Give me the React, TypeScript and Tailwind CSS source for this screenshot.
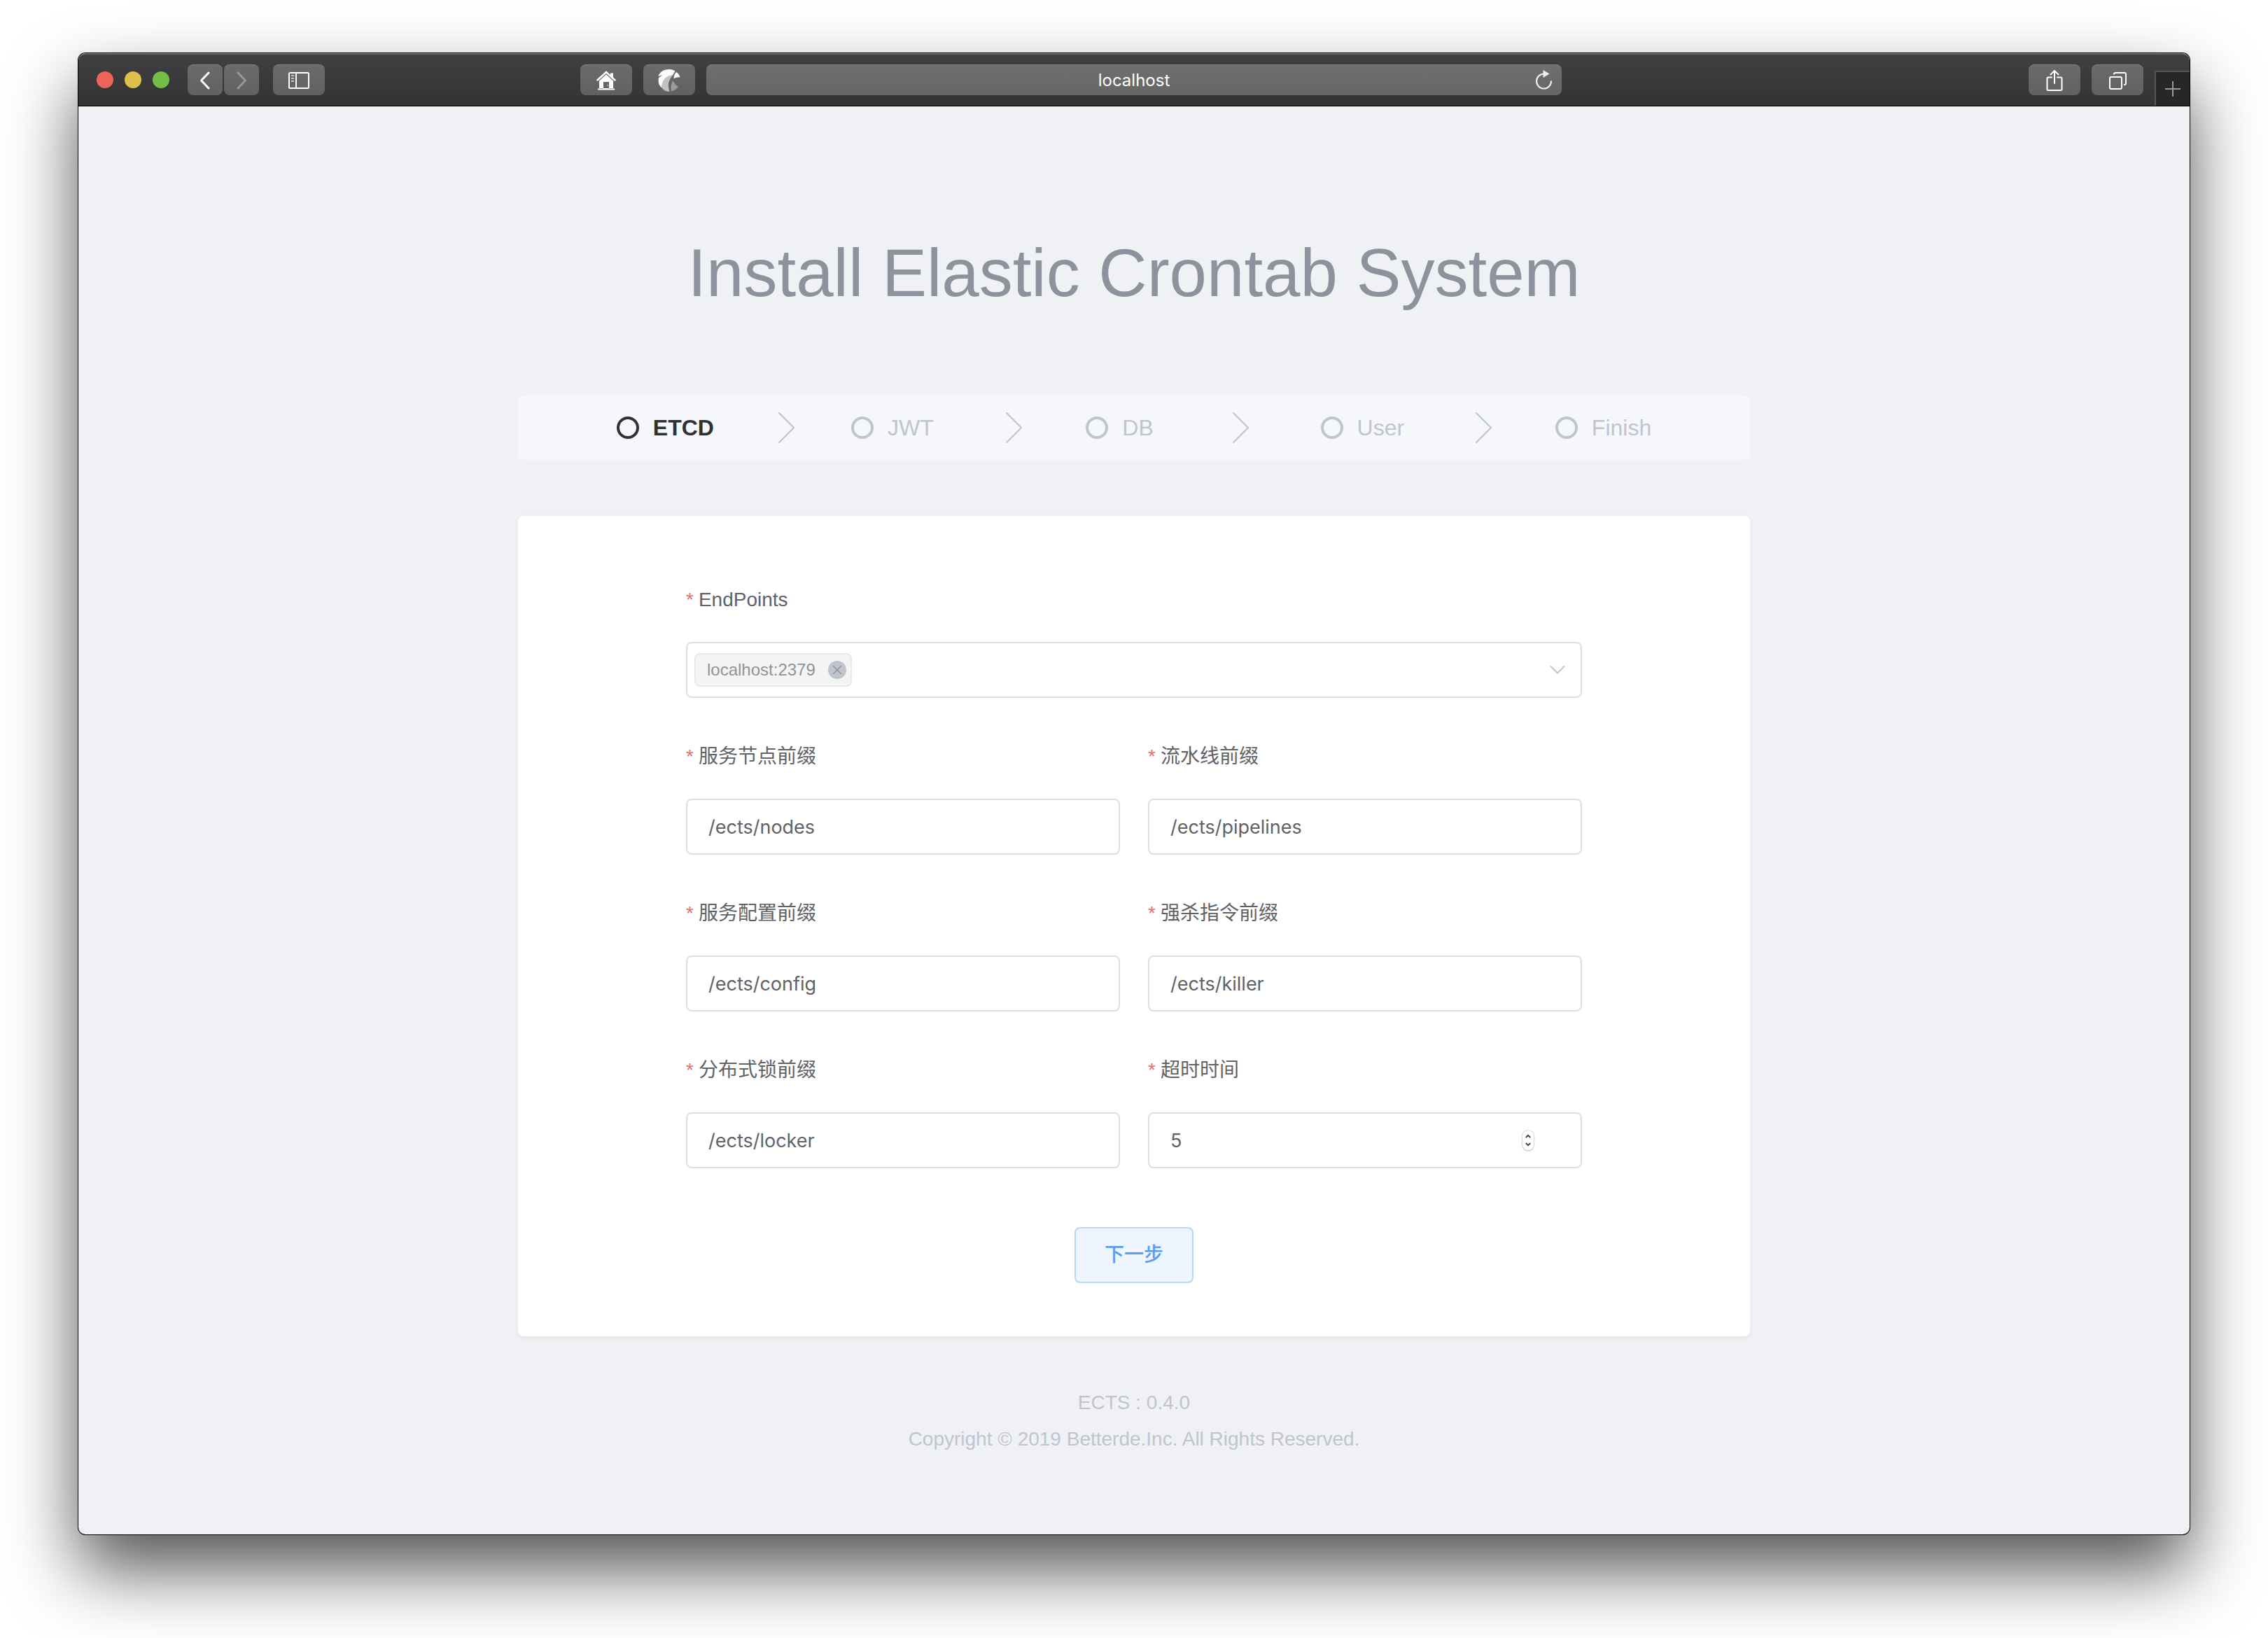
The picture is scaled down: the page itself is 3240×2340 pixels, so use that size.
import { useState, type ReactNode } from "react";

const steps = ["ETCD", "JWT", "DB", "User", "Finish"];

const fields = [
  { id: "nodes", label: "服务节点前缀", value: "/ects/nodes" },
  { id: "pipelines", label: "流水线前缀", value: "/ects/pipelines" },
  { id: "config", label: "服务配置前缀", value: "/ects/config" },
  { id: "killer", label: "强杀指令前缀", value: "/ects/killer" },
  { id: "locker", label: "分布式锁前缀", value: "/ects/locker" },
];

function ToolButton({ label, narrow, children }: { label: string; narrow?: boolean; children: ReactNode }) {
  return (
    <button
      type="button"
      aria-label={label}
      className={
        (narrow ? "w-[50px]" : "w-[74px]") +
        " flex h-11 shrink-0 items-center justify-center rounded-lg border-t border-[#818183] bg-linear-to-b from-[#6b6b6d] to-[#616163]"
      }
    >
      {children}
    </button>
  );
}

function Toolbar() {
  return (
    <header className="grid h-[76px] grid-cols-[1fr_1222px_1fr] items-center rounded-t-[10px] border-y border-t-[#7c7e7c] border-b-black bg-linear-to-b from-[#404042] to-[#333334] shadow-[inset_0_1px_0_#5e605f]">
      <div className="flex items-center justify-between pr-4 pl-[26px]">
        <div className="flex items-center">
          <div className="flex gap-4">
            <button type="button" aria-label="Close" className="size-6 rounded-full bg-[#ed655a]" />
            <button type="button" aria-label="Minimize" className="size-6 rounded-full bg-[#e0c04c]" />
            <button type="button" aria-label="Zoom" className="size-6 rounded-full bg-[#72be47]" />
          </div>
          <div className="ml-[26px] flex gap-0.5">
            <ToolButton label="Back" narrow>
              <svg width="50" height="42" viewBox="0 0 50 42" fill="none" stroke="#fff" strokeWidth="3" strokeLinecap="round" strokeLinejoin="round">
                <path d="M30 10 19.500 21 30 32" />
              </svg>
            </ToolButton>
            <ToolButton label="Forward" narrow>
              <svg width="50" height="42" viewBox="0 0 50 42" fill="none" stroke="#98989a" strokeWidth="3" strokeLinecap="round" strokeLinejoin="round">
                <path d="M20 10 30.500 21 20 32" />
              </svg>
            </ToolButton>
          </div>
          <div className="ml-5 flex">
            <ToolButton label="Sidebar">
              <svg width="30" height="24" viewBox="0 0 30 24" fill="none" stroke="#fff" strokeWidth="2">
                <rect x="1" y="1" width="28" height="22" rx="1.500" />
                <path d="M11 1v22" />
                <path d="M4 5h4M4 9h4M4 13h4" stroke="#c4c4c6" />
              </svg>
            </ToolButton>
          </div>
        </div>
        <div className="flex gap-4">
          <ToolButton label="Home">
            <svg width="28" height="28" viewBox="0 0 28 28" fill="#fff">
              <path d="M4 13.500 14 4.500 24 13.500V25H4zM10 16v10h8V16z" fillRule="evenodd" />
              <path d="M1.500 13.500 14 2l12.500 11.500" fill="none" stroke="#676769" strokeWidth="5" />
              <path d="M1.500 13.500 14 2l12.500 11.500" fill="none" stroke="#fff" strokeWidth="2.500" strokeLinecap="round" />
              <path d="M20 3.500h4V10l-4-3.500zM2 25.500h8v2H2zM18 25.500h8v2h-8zM10 26h8v1.500h-8z" />
              <circle cx="16.200" cy="21" r="0.700" />
            </svg>
          </ToolButton>
          <ToolButton label="Bookmark">
            <svg width="32" height="32" viewBox="0 0 32 32">
              <path d="M0.500 10C2 4 8 0 16 0c3.500 0 6.500 1 8.500 2.500L21 8.500C12 9.500 5.500 16 5.500 26.500 1 23 -0.500 17 1.200 12L6.500 8z" fill="#fbfbfb" />
              <path d="M21 8.500C18 12 14.500 18 15 23c0 3 .5 6 1.500 8.800C12 32 8 30 5.500 26.500 5 16 11.500 8.500 21 8.500z" fill="#c2c2c4" />
              <path d="M26 4c3 1.800 5 4.500 5.500 7.500-3-.5-6 .2-9 2 .2-4 1-7 3.500-9.500z" fill="#fff" />
              <path d="M21.500 16c1.500 4 4 7 7.500 9-2.500 3.200-5.500 5.500-10 6.500-1.300-5.500-.5-11 2.500-15.500z" fill="#9b9b9d" />
            </svg>
          </ToolButton>
        </div>
      </div>

      <div className="flex h-11 items-center rounded-lg border-t border-[#818183] bg-linear-to-b from-[#6f6f70] to-[#666667] pr-3 pl-[38px]">
        <input
          aria-label="Address"
          defaultValue="localhost"
          className="min-w-0 flex-1 bg-transparent text-center font-['Inter','Liberation_Sans',sans-serif] text-[24px] leading-8 text-white outline-none"
        />
        <button type="button" aria-label="Reload" className="flex size-[26px] items-center justify-center">
          <svg width="26" height="30" viewBox="0 0 26 30" className="shrink-0">
            <path d="M13 5.500A10.500 10.500 0 1 0 23 15.500" fill="none" stroke="#ececec" strokeWidth="2.200" />
            <path d="M11.500 0 20.500 5.500 11.500 11z" fill="#ececec" />
          </svg>
        </button>
      </div>

      <div className="flex items-center justify-end gap-4 self-stretch">
        <ToolButton label="Share">
          <svg width="24" height="32" viewBox="0 0 24 32" fill="none" stroke="#fff" strokeWidth="2" strokeLinecap="round" strokeLinejoin="round">
            <path d="M8 11.500H3a1.500 1.500 0 0 0-1.500 1.500v15.500A1.500 1.500 0 0 0 3 30h18a1.500 1.500 0 0 0 1.500-1.500V13a1.500 1.500 0 0 0-1.500-1.500h-5M12 20V2M6.500 7.500 12 2l5.500 5.500" />
          </svg>
        </ToolButton>
        <ToolButton label="Tabs">
          <svg width="26" height="26" viewBox="0 0 26 26" fill="none" stroke="#fff" strokeWidth="2" strokeLinejoin="round">
            <rect x="2" y="8" width="17" height="17" rx="2" />
            <path d="M8 4.500V4a2 2 0 0 1 2-2h13a2 2 0 0 1 2 2v13a2 2 0 0 1-2 2h-1" />
          </svg>
        </ToolButton>
        <button type="button" aria-label="New tab" className="flex size-[50px] items-center justify-center self-end border-t-2 border-l-2 border-[#555557] bg-[#272727]">
          <svg width="22" height="22" viewBox="0 0 22 22" stroke="#9a9a9a" strokeWidth="2">
            <path d="M11 0v22M0 11h22" />
          </svg>
        </button>
      </div>
    </header>
  );
}

function Steps() {
  return (
    <ol className="flex h-[92px] w-full items-center rounded-lg bg-[#f5f7fb] px-[8%] text-[32px] leading-10">
      {steps.map((name, i) => {
        const last = i === steps.length - 1;
        return (
          <li
            key={name}
            aria-current={i === 0 ? "step" : undefined}
            className={
              (last ? "" : "flex-1 ") +
              "flex items-center " +
              (i === 0 ? "font-bold text-[#303133]" : "text-[#c0c4cc]")
            }
          >
            <span className="mr-5 size-8 rounded-full border-4 border-current" />
            <span>{name}</span>
            {!last && (
              <span className="flex flex-1 justify-center">
                <svg width="34" height="44" viewBox="0 0 34 44" fill="none" stroke="#c0c4cc" strokeWidth="2" strokeLinecap="round">
                  <path d="M12 1 33 22 12 43" />
                </svg>
              </span>
            )}
          </li>
        );
      })}
    </ol>
  );
}

function Label({ htmlFor, children }: { htmlFor: string; children: ReactNode }) {
  return (
    <label htmlFor={htmlFor} className="flex gap-[7px] pb-5 text-[28px] leading-20 text-[#606266]">
      <span className="text-[#e8706a]">*</span>
      {children}
    </label>
  );
}

export default function App() {
  const [timeout, setTimeoutValue] = useState(5);

  return (
    <div className="flex min-h-screen flex-col bg-white px-28 pt-[76px] pb-[148px] font-['Liberation_Sans','Noto_Sans_CJK_SC',sans-serif]">
      <div className="flex flex-1 flex-col rounded-[10px] bg-[#f0f1f5] shadow-[0_0_0_1px_#000,0_50px_100px_rgba(0,0,0,0.68)]">
        <Toolbar />
        <main className="flex flex-1 flex-col items-center px-8 pt-[183px] pb-[110px]">
          <h1 className="mb-[120px] text-[96px] leading-[110px] text-[#8c939d]">Install Elastic Crontab System</h1>
          <div className="flex w-full max-w-[1760px] flex-col gap-20">
            <Steps />
            <form
              onSubmit={(e) => e.preventDefault()}
              className="flex flex-col items-center rounded-lg bg-white px-60 pt-20 pb-[76px] shadow-[0_2px_8px_rgba(0,0,0,0.06)]"
            >
              <div className="grid w-full grid-cols-2 gap-x-10 gap-y-11">
                <div className="col-span-2">
                  <Label htmlFor="endpoints">EndPoints</Label>
                  <div className="flex h-20 items-center rounded-lg border-2 border-[#dcdfe6] bg-white pr-[22px] pl-2.5">
                    <span className="flex h-12 items-center rounded-lg border-2 border-[#e9e9eb] bg-[#f4f4f5] pr-1.5 pl-4 text-[24px] leading-8 text-[#909399]">
                      localhost:2379
                      <button type="button" aria-label="Remove localhost:2379" className="ml-[18px] flex size-[26px] items-center justify-center rounded-full bg-[#c0c4cc]">
                        <svg width="14" height="14" viewBox="0 0 14 14" stroke="#909399" strokeWidth="1.500">
                          <path d="M1 1l12 12M13 1 1 13" />
                        </svg>
                      </button>
                    </span>
                    <input id="endpoints" className="h-full min-w-0 flex-1 bg-transparent px-4 text-[28px] outline-none" />
                    <button type="button" aria-label="Show options">
                      <svg width="22" height="14" viewBox="0 0 22 14" fill="none" stroke="#c0c4cc" strokeWidth="2" strokeLinecap="round">
                        <path d="M1.500 2 11 11.500 20.500 2" />
                      </svg>
                    </button>
                  </div>
                </div>
                {fields.map((f) => (
                  <div key={f.id}>
                    <Label htmlFor={f.id}>{f.label}</Label>
                    <input
                      id={f.id}
                      defaultValue={f.value}
                      className="h-20 w-full rounded-lg border-2 border-[#dcdfe6] bg-white px-[30px] font-['Inter','Liberation_Sans',sans-serif] text-[27px] text-[#606266] outline-none"
                    />
                  </div>
                ))}
                <div>
                  <Label htmlFor="timeout">超时时间</Label>
                  <div className="flex h-20 items-center rounded-lg border-2 border-[#dcdfe6] bg-white pr-[67px] pl-[30px]">
                    <input
                      id="timeout"
                      type="number"
                      value={timeout}
                      onChange={(e) => setTimeoutValue(Number(e.target.value))}
                      className="h-full min-w-0 flex-1 [appearance:textfield] bg-transparent font-['Inter','Liberation_Sans',sans-serif] text-[27px] text-[#606266] outline-none [&::-webkit-inner-spin-button]:appearance-none"
                    />
                    <div className="flex h-7 w-4 flex-col rounded-full bg-white shadow-[0_0_0_1px_#d8d8d8,0_1px_2px_rgba(0,0,0,0.4)]">
                      <button type="button" aria-label="Increase" onClick={() => setTimeoutValue(timeout + 1)} className="flex h-3.5 items-center justify-center pt-0.5">
                        <svg width="8" height="6" viewBox="0 0 8 6" fill="none" stroke="#404040" strokeWidth="1.800">
                          <path d="M0.800 5 4 1.800 7.200 5" />
                        </svg>
                      </button>
                      <button type="button" aria-label="Decrease" onClick={() => setTimeoutValue(timeout - 1)} className="flex h-3.5 items-center justify-center pb-0.5">
                        <svg width="8" height="6" viewBox="0 0 8 6" fill="none" stroke="#404040" strokeWidth="1.800">
                          <path d="M0.800 1 4 4.200 7.200 1" />
                        </svg>
                      </button>
                    </div>
                  </div>
                </div>
              </div>
              <button type="submit" className="mt-[84px] h-20 rounded-lg border-2 border-[#b9d7fb] bg-[#eef5fe] px-[41px] text-[28px] leading-8 font-medium text-[#589df8]">
                下一步
              </button>
            </form>
          </div>
          <footer className="mt-[69px] text-center text-[28px] leading-[52px] text-[#c0c4cc]">
            <p>ECTS : 0.4.0</p>
            <p>Copyright © 2019 Betterde.Inc. All Rights Reserved.</p>
          </footer>
        </main>
      </div>
    </div>
  );
}
